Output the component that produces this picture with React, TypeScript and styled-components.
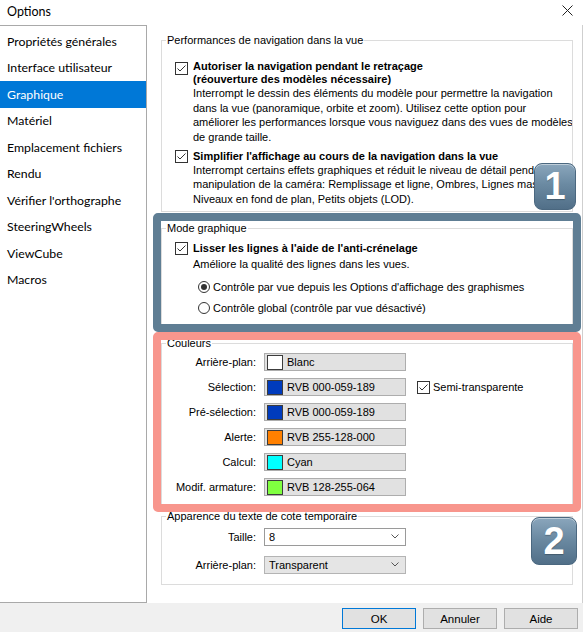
import React from 'react';
import styled, { createGlobalStyle } from 'styled-components';

const GlobalStyle = createGlobalStyle`
    html, body {
        margin: 0;
        padding: 0;
        background: #ffffff;
    }
    body {
        width: 583px;
        height: 632px;
        overflow: hidden;
        font-family: "Liberation Sans", Arial, sans-serif;
        color: #000;
    }
    * {
        box-sizing: border-box;
    }
`;

const Window = styled.div`
    position: relative;
    width: 583px;
    height: 632px;
    display: flex;
    flex-direction: column;
    background: #ffffff;
`;

const TitleBar = styled.div`
    height: 25px;
    display: flex;
    justify-content: space-between;
    align-items: flex-start;
    padding: 4px 10px 0 7px;
    font-family: Lato, "Noto Sans", sans-serif;
    font-size: 12.5px;
    line-height: 15px;
`;

const Body = styled.div`
    height: 578px;
    display: flex;
`;

const Sidebar = styled.ul`
    width: 147px;
    flex-shrink: 0;
    margin: 0;
    padding: 2px 0 0;
    list-style: none;
    border-top: 1px solid #a9a9a9;
    border-right: 1px solid #a9a9a9;
    border-bottom: 1px solid #a9a9a9;
    font-family: Lato, "Noto Sans", sans-serif;
    font-size: 12.3px;
`;

const NavItem = styled.li<{ $active?: boolean }>`
    height: 26.5px;
    display: flex;
    align-items: center;
    padding-left: 7px;
    white-space: nowrap;
    background: ${(p) => (p.$active ? '#0078d7' : 'transparent')};
    color: ${(p) => (p.$active ? '#ffffff' : '#000000')};
`;

const Content = styled.div`
    flex: 1;
    min-width: 0;
    padding: 9px 9px 0 14px;
    border-right: 1px solid #cfcfcf;
    font-size: 11px;
`;

const Group = styled.fieldset<{ $gap?: number; $pt: number; $pb: number }>`
    margin: ${(p) => p.$gap ?? 0}px 0 0;
    padding: ${(p) => p.$pt}px 8px ${(p) => p.$pb}px 0;
    border: 1px solid #dcdcdc;
    min-width: 0;
    overflow: hidden;
`;

const Legend = styled.legend`
    padding: 0 1px;
    margin-left: 4px;
    line-height: 13px;
    font-size: 11px;
    color: #000;
`;

const Option = styled.div<{ $top?: number }>`
    display: grid;
    grid-template-columns: 13px 1fr;
    column-gap: 5px;
    margin: ${(p) => p.$top ?? 0}px 0 0 13px;
`;

const BoxSlot = styled.div<{ $top?: number }>`
    padding-top: ${(p) => p.$top ?? 0.5}px;
`;

const Heading = styled.div`
    font-weight: bold;
    line-height: 13px;
    white-space: nowrap;
`;

const Desc = styled.div<{ $top?: number; $lh?: number }>`
    margin-top: ${(p) => p.$top ?? 0}px;
    line-height: ${(p) => p.$lh ?? 14.5}px;
    white-space: nowrap;
`;

const RadioRow = styled.div<{ $top: number }>`
    display: flex;
    align-items: center;
    gap: 3px;
    height: 14px;
    margin: ${(p) => p.$top}px 0 0 36px;
    white-space: nowrap;
`;

const FieldRow = styled.div<{ $top?: number }>`
    display: grid;
    grid-template-columns: 94px 142px auto;
    column-gap: 8px;
    align-items: center;
    height: 18px;
    margin-top: ${(p) => p.$top ?? 7}px;
`;

const Label = styled.span`
    text-align: right;
    white-space: nowrap;
`;

const ColorField = styled.div`
    height: 18px;
    display: flex;
    align-items: center;
    gap: 4px;
    padding-left: 2px;
    background: #e1e1e1;
    border: 1px solid #adadad;
    white-space: nowrap;
`;

const Swatch = styled.span<{ $color: string }>`
    width: 16px;
    height: 15px;
    background: ${(p) => p.$color};
    border: 1px solid #3c3c3c;
`;

const Aside = styled.label`
    display: flex;
    align-items: center;
    gap: 3px;
    margin-left: 3px;
    white-space: nowrap;
`;

const Select = styled.div<{ $disabled?: boolean }>`
    height: 18px;
    display: flex;
    align-items: center;
    justify-content: space-between;
    padding: 0 6px 0 4px;
    background: ${(p) => (p.$disabled ? '#e5e5e5' : '#ffffff')};
    border: 1px solid ${(p) => (p.$disabled ? '#b4b4b4' : '#9a9a9a')};
`;

const Footer = styled.div`
    height: 29px;
    display: flex;
    justify-content: flex-end;
    align-items: flex-start;
    gap: 7px;
    padding: 5px 5px 0 0;
    background: #f0f0f0;
`;

const Button = styled.button<{ $default?: boolean }>`
    width: 74px;
    height: 21px;
    padding: 0;
    background: #e1e1e1;
    border: 1px solid ${(p) => (p.$default ? '#0078d7' : '#adadad')};
    font-family: "Liberation Sans", Arial, sans-serif;
    font-size: 11.5px;
    color: #000;
`;

// annotation frames and numbered badges drawn over the dialog
const Frame = styled.div<{ $color: string; $top: number; $height: number }>`
    position: absolute;
    left: 153px;
    top: ${(p) => p.$top}px;
    width: 428px;
    height: ${(p) => p.$height}px;
    border: 8px solid ${(p) => p.$color};
    border-radius: 5px;
    pointer-events: none;
`;

const Badge = styled.div<{ $left: number; $top: number; $w: number; $h: number }>`
    position: absolute;
    left: ${(p) => p.$left}px;
    top: ${(p) => p.$top}px;
    width: ${(p) => p.$w}px;
    height: ${(p) => p.$h}px;
    display: flex;
    align-items: center;
    justify-content: center;
    border-radius: 8px;
    border: 1px solid #4b6880;
    background: linear-gradient(180deg, #8aa6bc 0%, #6b8aa2 45%, #516f88 100%);
    box-shadow: inset 0 1px 0 rgba(255, 255, 255, 0.45);
    color: #ffffff;
    font-family: "Liberation Sans", Arial, sans-serif;
    font-weight: bold;
    font-size: 38px;
    text-shadow: 0 1px 1px rgba(0, 0, 0, 0.25);
`;

function CheckBox() {
    return (
        <svg width="13" height="13" viewBox="0 0 13 13" style={{ display: 'block' }}>
            <rect x="0.5" y="0.5" width="12" height="12" fill="#fff" stroke="#333" />
            <polyline points="2.5,6.5 5,9 10.5,3.5" fill="none" stroke="#333" strokeWidth="1" />
        </svg>
    );
}

function Radio({ checked }: { checked?: boolean }) {
    return (
        <svg width="12" height="12" viewBox="0 0 12 12" style={{ display: 'block' }}>
            <circle cx="6" cy="6" r="5.5" fill="#fff" stroke="#333" />
            {checked && <circle cx="6" cy="6" r="3" fill="#333" />}
        </svg>
    );
}

function Chevron() {
    return (
        <svg width="8" height="5" viewBox="0 0 8 5">
            <polyline points="0.5,0.5 4,4 7.5,0.5" fill="none" stroke="#555" />
        </svg>
    );
}

const navItems = [
    'Propriétés générales',
    'Interface utilisateur',
    'Graphique',
    'Matériel',
    'Emplacement fichiers',
    'Rendu',
    "Vérifier l'orthographe",
    'SteeringWheels',
    'ViewCube',
    'Macros',
];

const colors = [
    { label: 'Arrière-plan:', color: '#ffffff', value: 'Blanc' },
    { label: 'Sélection:', color: '#003bbd', value: 'RVB 000-059-189', aside: true },
    { label: 'Pré-sélection:', color: '#003bbd', value: 'RVB 000-059-189' },
    { label: 'Alerte:', color: '#ff8000', value: 'RVB 255-128-000' },
    { label: 'Calcul:', color: '#00ffff', value: 'Cyan' },
    { label: 'Modif. armature:', color: '#80ff40', value: 'RVB 128-255-064' },
];

export default function App() {
    return (
        <Window>
            <GlobalStyle />
            <TitleBar>
                <span>Options</span>
                <svg width="11" height="11" viewBox="0 0 11 11" style={{ marginTop: 1 }}>
                    <path d="M0.5 0.5 L10.5 10.5 M10.5 0.5 L0.5 10.5" stroke="#222" strokeWidth="1" />
                </svg>
            </TitleBar>
            <Body>
                <Sidebar>
                    {navItems.map((item) => (
                        <NavItem key={item} $active={item === 'Graphique'}>
                            {item}
                        </NavItem>
                    ))}
                </Sidebar>
                <Content>
                    <Group $pt={13} $pb={5}>
                        <Legend>Performances de navigation dans la vue</Legend>
                        <Option>
                            <BoxSlot $top={2}>
                                <CheckBox />
                            </BoxSlot>
                            <div>
                                <Heading>
                                    Autoriser la navigation pendant le retraçage
                                    <br />
                                    (réouverture des modèles nécessaire)
                                </Heading>
                                <Desc>
                                    Interrompt le dessin des éléments du modèle pour permettre la navigation
                                    <br />
                                    dans la vue (panoramique, orbite et zoom). Utilisez cette option pour
                                    <br />
                                    améliorer les performances lorsque vous naviguez dans des vues de modèles
                                    <br />
                                    de grande taille.
                                </Desc>
                            </div>
                        </Option>
                        <Option $top={5.5}>
                            <BoxSlot>
                                <CheckBox />
                            </BoxSlot>
                            <div>
                                <Heading>Simplifier l'affichage au cours de la navigation dans la vue</Heading>
                                <Desc>
                                    Interrompt certains effets graphiques et réduit le niveau de détail pendant la
                                    <br />
                                    manipulation de la caméra: Remplissage et ligne, Ombres, Lignes masquées,
                                    <br />
                                    Niveaux en fond de plan, Petits objets (LOD).
                                </Desc>
                            </div>
                        </Option>
                    </Group>

                    <Group $gap={9.5} $pt={7} $pb={14}>
                        <Legend>Mode graphique</Legend>
                        <Option>
                            <BoxSlot>
                                <CheckBox />
                            </BoxSlot>
                            <div>
                                <Heading>Lisser les lignes à l'aide de l'anti-crénelage</Heading>
                                <Desc $top={2} $lh={14}>
                                    Améliore la qualité des lignes dans les vues.
                                </Desc>
                            </div>
                        </Option>
                        <RadioRow $top={9}>
                            <Radio checked />
                            Contrôle par vue depuis les Options d'affichage des graphismes
                        </RadioRow>
                        <RadioRow $top={7}>
                            <Radio />
                            Contrôle global (contrôle par vue désactivé)
                        </RadioRow>
                    </Group>

                    <Group $gap={7} $pt={3.5} $pb={8}>
                        <Legend>Couleurs</Legend>
                        {colors.map((c, i) => (
                            <FieldRow key={c.label} $top={i === 0 ? 0 : 7}>
                                <Label>{c.label}</Label>
                                <ColorField>
                                    <Swatch $color={c.color} />
                                    {c.value}
                                </ColorField>
                                {c.aside && (
                                    <Aside>
                                        <CheckBox />
                                        Semi-transparente
                                    </Aside>
                                )}
                            </FieldRow>
                        ))}
                    </Group>

                    <Group $gap={5} $pt={4.5} $pb={10}>
                        <Legend>Apparence du texte de cote temporaire</Legend>
                        <FieldRow $top={0}>
                            <Label>Taille:</Label>
                            <Select>
                                8
                                <Chevron />
                            </Select>
                        </FieldRow>
                        <FieldRow $top={10}>
                            <Label>Arrière-plan:</Label>
                            <Select $disabled>
                                Transparent
                                <Chevron />
                            </Select>
                        </FieldRow>
                    </Group>
                </Content>
            </Body>
            <Footer>
                <Button $default>OK</Button>
                <Button>Annuler</Button>
                <Button>Aide</Button>
            </Footer>

            <Frame $color="#5f7e94" $top={213} $height={119} />
            <Frame $color="#f8968d" $top={332} $height={180} />
            <Badge $left={534} $top={163} $w={42} $h={47}>
                1
            </Badge>
            <Badge $left={531} $top={517} $w={46} $h={48}>
                2
            </Badge>
        </Window>
    );
}
